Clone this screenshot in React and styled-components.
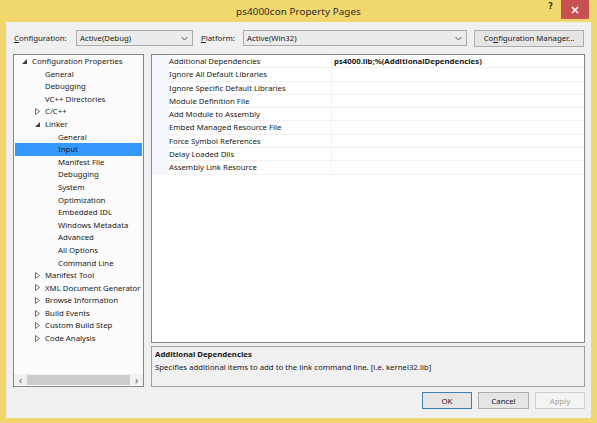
import React from "react";
import styled, { createGlobalStyle } from "styled-components";

const GlobalStyle = createGlobalStyle`
  html, body {
    margin: 0;
    padding: 0;
    background: #f0d86c;
  }
  body {
    font-family: "Noto Sans", "Open Sans", sans-serif;
    font-size: 7.8px;
    color: #1a1a1a;
  }
`;

const treeItems = [
  { text: "Configuration Properties", level: 0, arrow: "open" },
  { text: "General", level: 1 },
  { text: "Debugging", level: 1 },
  { text: "VC++ Directories", level: 1 },
  { text: "C/C++", level: 1, arrow: "closed" },
  { text: "Linker", level: 1, arrow: "open" },
  { text: "General", level: 2 },
  { text: "Input", level: 2, selected: true },
  { text: "Manifest File", level: 2 },
  { text: "Debugging", level: 2 },
  { text: "System", level: 2 },
  { text: "Optimization", level: 2 },
  { text: "Embedded IDL", level: 2 },
  { text: "Windows Metadata", level: 2 },
  { text: "Advanced", level: 2 },
  { text: "All Options", level: 2 },
  { text: "Command Line", level: 2 },
  { text: "Manifest Tool", level: 1, arrow: "closed" },
  { text: "XML Document Generator", level: 1, arrow: "closed" },
  { text: "Browse Information", level: 1, arrow: "closed" },
  { text: "Build Events", level: 1, arrow: "closed" },
  { text: "Custom Build Step", level: 1, arrow: "closed" },
  { text: "Code Analysis", level: 1, arrow: "closed" },
];

const properties = [
  { name: "Additional Dependencies", value: "ps4000.lib;%(AdditionalDependencies)" },
  { name: "Ignore All Default Libraries" },
  { name: "Ignore Specific Default Libraries" },
  { name: "Module Definition File" },
  { name: "Add Module to Assembly" },
  { name: "Embed Managed Resource File" },
  { name: "Force Symbol References" },
  { name: "Delay Loaded Dlls" },
  { name: "Assembly Link Resource" },
];

function Arrow({ kind }) {
  if (kind === "open") {
    return (
      <svg width="5" height="5" viewBox="0 0 5 5">
        <path d="M5 0 L5 5 L0 5 Z" fill="#404040" />
      </svg>
    );
  }
  return (
    <svg width="5" height="7" viewBox="0 0 5 7">
      <path d="M0.5 0.5 L4.5 3.5 L0.5 6.5 Z" fill="none" stroke="#606060" strokeWidth="0.9" />
    </svg>
  );
}

function Chevron() {
  return (
    <svg width="7" height="5" viewBox="0 0 7 5">
      <path d="M0.5 1 L3.5 4 L6.5 1" fill="none" stroke="#555" strokeWidth="1" />
    </svg>
  );
}

function App() {
  return (
    <>
      <GlobalStyle />
      <Frame>
        <TitleBar>
          <span />
          <Title>ps4000con Property Pages</Title>
          <Controls>
            <HelpBtn>?</HelpBtn>
            <CloseBtn>
              <svg width="8" height="8" viewBox="0 0 8 8">
                <path d="M1 1 L7 7 M7 1 L1 7" stroke="#fff" strokeWidth="1.6" />
              </svg>
            </CloseBtn>
          </Controls>
        </TitleBar>
        <Client>
          <TopRow>
            <Label w={63}>
              <u>C</u>onfiguration:
            </Label>
            <Combo w={117}>
              Active(Debug)
              <Chevron />
            </Combo>
            <Label w={43}>
              <u>P</u>latform:
            </Label>
            <Combo w={224}>
              Active(Win32)
              <Chevron />
            </Combo>
            <Button w={110}>
              Co<u>n</u>figuration Manager...
            </Button>
          </TopRow>
          <Main>
            <TreePanel>
              <TreeList>
                {treeItems.map((item, i) => (
                  <TreeRow key={i} level={item.level} selected={item.selected}>
                    <ArrowSlot>{item.arrow && <Arrow kind={item.arrow} />}</ArrowSlot>
                    {item.text}
                  </TreeRow>
                ))}
              </TreeList>
              <HScroll>
                <ScrollArrow>&lsaquo;</ScrollArrow>
                <Thumb />
                <ScrollArrow>&rsaquo;</ScrollArrow>
              </HScroll>
            </TreePanel>
            <RightCol>
              <Grid>
                {properties.map((p, i) => (
                  <PropRow key={i}>
                    <Gutter />
                    <PropName>{p.name}</PropName>
                    <PropValue>{p.value}</PropValue>
                  </PropRow>
                ))}
              </Grid>
              <Desc>
                <DescTitle>Additional Dependencies</DescTitle>
                <div>Specifies additional items to add to the link command line. [i.e. kernel32.lib]</div>
              </Desc>
            </RightCol>
          </Main>
          <ButtonRow>
            <Button w={50} primary>
              OK
            </Button>
            <Button w={51}>Cancel</Button>
            <Button w={50} disabled>
              Apply
            </Button>
          </ButtonRow>
        </Client>
      </Frame>
    </>
  );
}

export default App;

const Frame = styled.div`
  width: 597px;
  height: 423px;
  box-sizing: border-box;
  background: #f0d86c;
  padding: 0 6px 5px 6px;
  display: flex;
  flex-direction: column;
`;

const TitleBar = styled.div`
  height: 22px;
  display: grid;
  grid-template-columns: 1fr auto 1fr;
  align-items: start;
`;

const Title = styled.div`
  font-size: 9.8px;
  color: #2b2b2b;
  padding-top: 5px;
  letter-spacing: 0.1px;
`;

const Controls = styled.div`
  justify-self: end;
  display: flex;
  align-items: flex-start;
  gap: 8px;
  margin-right: 2px;
`;

const HelpBtn = styled.div`
  font-family: "DejaVu Sans", sans-serif;
  font-weight: bold;
  font-size: 8px;
  color: #333;
  padding-top: 2px;
`;

const CloseBtn = styled.div`
  width: 28px;
  height: 19px;
  background: #c75050;
  display: flex;
  align-items: center;
  justify-content: center;
`;

const Client = styled.div`
  flex: 1;
  background: #f0f0f0;
  display: flex;
  flex-direction: column;
  padding: 8px 6px 9px 7px;
  min-height: 0;
`;

const TopRow = styled.div`
  display: flex;
  align-items: center;
  height: 16px;
`;

const Label = styled.div`
  width: ${(p) => p.w}px;
  box-sizing: border-box;
  padding-left: 1px;
  white-space: nowrap;
`;

const Combo = styled.div`
  width: ${(p) => p.w}px;
  height: 16px;
  box-sizing: border-box;
  border: 1px solid #acacac;
  background: #ebebeb;
  display: flex;
  align-items: center;
  justify-content: space-between;
  padding: 0 4px 0 3px;
  margin-right: 7px;
`;

const Button = styled.div`
  width: ${(p) => p.w}px;
  height: 17px;
  box-sizing: border-box;
  border: 1px solid ${(p) => (p.primary ? "#3c7fb1" : p.disabled ? "#cfcfcf" : "#adadad")};
  background: ${(p) => (p.disabled ? "#f4f4f4" : "#e5e5e5")};
  color: ${(p) => (p.disabled ? "#a3a3a3" : "#1a1a1a")};
  display: flex;
  align-items: center;
  justify-content: center;
`;

const Main = styled.div`
  flex: 1;
  display: flex;
  gap: 7px;
  margin-top: 8px;
  min-height: 0;
`;

const TreePanel = styled.div`
  width: 131px;
  box-sizing: border-box;
  border: 1px solid #828790;
  background: #fcfcfc;
  display: flex;
  flex-direction: column;
`;

const TreeList = styled.div`
  flex: 1;
  padding: 0 1px;
`;

const TreeRow = styled.div`
  height: 12.6px;
  line-height: 12.6px;
  display: flex;
  align-items: center;
  padding-left: ${(p) => 6 + p.level * 13}px;
  background: ${(p) => (p.selected ? "#3399ff" : "transparent")};
  white-space: nowrap;
`;

const ArrowSlot = styled.span`
  width: 11px;
  display: inline-flex;
  align-items: center;
  justify-content: flex-start;
  padding-left: 1px;
  box-sizing: border-box;
`;

const HScroll = styled.div`
  height: 11px;
  display: flex;
  align-items: center;
  background: #f0f0f0;
  margin-bottom: 1px;
`;

const ScrollArrow = styled.div`
  width: 13px;
  text-align: center;
  font-size: 10px;
  line-height: 10px;
  color: #606060;
`;

const Thumb = styled.div`
  flex: 1;
  height: 10px;
  background: #cdcdcd;
`;

const RightCol = styled.div`
  flex: 1;
  display: flex;
  flex-direction: column;
  gap: 3px;
`;

const Grid = styled.div`
  flex: 1;
  border: 1px solid #828790;
  background: #fff;
`;

const PropRow = styled.div`
  display: flex;
  height: 13.3px;
  line-height: 13.3px;
`;

const Gutter = styled.div`
  width: 17px;
  background: #f3f6fb;
`;

const PropName = styled.div`
  width: 163px;
  box-sizing: border-box;
  border-bottom: 1px solid #f2f2f2;
  border-right: 1px solid #f2f2f2;
  white-space: nowrap;
  line-height: 12.3px;
`;

const PropValue = styled.div`
  flex: 1;
  padding-left: 2px;
  font-weight: bold;
  border-bottom: 1px solid #f2f2f2;
  white-space: nowrap;
  line-height: 12.3px;
`;

const Desc = styled.div`
  height: 41px;
  box-sizing: border-box;
  border: 1px solid #a0a0a0;
  background: #f0f0f0;
  padding: 1px 3px;
  line-height: 13px;
`;

const DescTitle = styled.div`
  font-weight: bold;
`;

const ButtonRow = styled.div`
  display: flex;
  justify-content: flex-end;
  gap: 6px;
  margin-top: 5px;
`;
